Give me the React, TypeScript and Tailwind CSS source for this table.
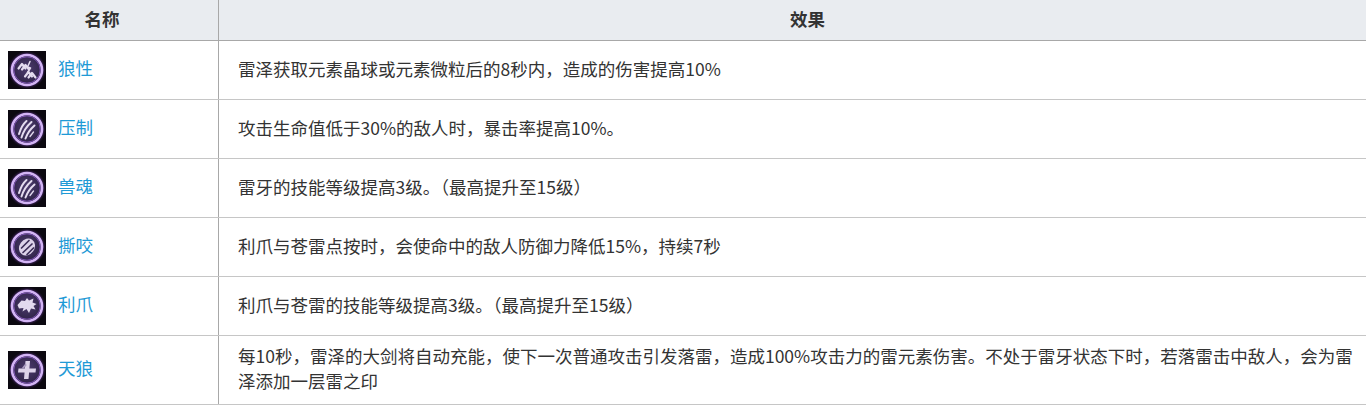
import React from "react";

type Glyph = "chevron" | "claw" | "bite" | "wolf" | "cross";

const rows: { name: string; glyph: Glyph; effect: string }[] = [
  { name: "狼性", glyph: "chevron", effect: "雷泽获取元素晶球或元素微粒后的8秒内，造成的伤害提高10%" },
  { name: "压制", glyph: "claw", effect: "攻击生命值低于30%的敌人时，暴击率提高10%。" },
  { name: "兽魂", glyph: "claw", effect: "雷牙的技能等级提高3级。（最高提升至15级）" },
  { name: "撕咬", glyph: "bite", effect: "利爪与苍雷点按时，会使命中的敌人防御力降低15%，持续7秒" },
  { name: "利爪", glyph: "wolf", effect: "利爪与苍雷的技能等级提高3级。（最高提升至15级）" },
  {
    name: "天狼",
    glyph: "cross",
    effect:
      "每10秒，雷泽的大剑将自动充能，使下一次普通攻击引发落雷，造成100%攻击力的雷元素伤害。不处于雷牙状态下时，若落雷击中敌人，会为雷泽添加一层雷之印",
  },
];

const GlyphShape = ({ glyph }: { glyph: Glyph }) => {
  const s = { stroke: "#e4dcef", fill: "none", strokeLinecap: "round" as const, strokeLinejoin: "round" as const };
  switch (glyph) {
    case "chevron":
      return (
        <g {...s} strokeWidth={2.2}>
          <path d="M10.5 17.5 L14 13 L17.5 17.5" />
          <path d="M14 18.5 L17.5 14 L21 18.5" />
          <path d="M17 25.5 L20.5 21 L24 25.5" />
          <path d="M20.5 26.5 L24 22 L27.5 26.5" />
          <path d="M22 10.5 L19.5 16 L22.5 17 L19.5 21.5" strokeWidth={1.5} />
        </g>
      );
    case "claw":
      return (
        <g {...s} strokeWidth={2}>
          <path d="M11 24 C 12.5 19, 14.5 14.5, 18.5 11" />
          <path d="M13.5 27.5 C 15.5 21, 19 16, 23.5 12" />
          <path d="M17.5 28.5 C 19.5 23, 22.5 19, 26.5 15.5" />
          <path d="M22 26.5 L25.5 22" strokeWidth={1.3} />
        </g>
      );
    case "bite":
      return (
        <g>
          <ellipse cx="19" cy="19" rx="7.5" ry="9" fill="#ddd3ea" transform="rotate(35 19 19)" />
          <g stroke="#3d2f58" strokeWidth={1.7} strokeLinecap="round">
            <path d="M13.5 20 L21 12.5" />
            <path d="M15 24.5 L24 16" />
            <path d="M19 26.5 L25.5 20" />
          </g>
        </g>
      );
    case "wolf":
      return (
        <path
          d="M9.5 18 L13.5 13.5 L17 14 L19 11 L21 13.5 L25.5 11.5 L24.5 15.5 L28.5 17 L25.5 19 L27.5 22.5 L23 21.5 L21 26 L18.5 22 L14.5 24.5 L15.5 21 L11 21.5 Z"
          fill="#e2d9ee"
        />
      );
    case "cross":
      return (
        <g fill="#ddd3ea">
          <path d="M17.5 10 L22 10 L20.5 28 L16 28 Z" />
          <path d="M10.5 17.5 L28 17.5 L27.5 21.5 L10 21.5 Z" />
          <path d="M13.5 17.5 L17.8 12 L18.6 14.3 L15.8 17.5 Z" fill="#a99bc0" />
        </g>
      );
  }
};

const SkillIcon = ({ glyph, id }: { glyph: Glyph; id: number }) => (
  <svg width="38" height="38" viewBox="0 0 38 38" className="shrink-0">
    <defs>
      <radialGradient id={`in${id}`} cx="50%" cy="45%" r="55%">
        <stop offset="0%" stopColor="#4d3c6e" />
        <stop offset="100%" stopColor="#2c2144" />
      </radialGradient>
      <radialGradient id={`gl${id}`} cx="50%" cy="50%" r="50%">
        <stop offset="75%" stopColor="#8a55c8" stopOpacity="0.9" />
        <stop offset="100%" stopColor="#2a1440" stopOpacity="0" />
      </radialGradient>
    </defs>
    <rect width="38" height="38" fill="#0b0810" />
    <circle cx="19" cy="19" r="19" fill={`url(#gl${id})`} />
    <circle cx="19" cy="19" r="15.5" fill={`url(#in${id})`} />
    <circle cx="19" cy="19" r="15" fill="none" stroke="#d3b4f5" strokeWidth="2.6" />
    <circle cx="19" cy="19" r="13.2" fill="none" stroke="#7b52b0" strokeWidth="1" />
    <GlyphShape glyph={glyph} />
  </svg>
);

export default function App() {
  return (
    <div
      className="w-[1366px] bg-white text-[17.5px] leading-[25px] text-[#333]"
      style={{ fontFamily: '"Microsoft YaHei", "Noto Sans CJK SC", "Noto Sans", sans-serif' }}
    >
      {/* header */}
      <div className="flex h-[41px] bg-[#e9ecf0] border-b border-[#a8a8a8] font-bold">
        <div className="w-[219px] shrink-0 border-r border-[#a8a8a8] flex items-center justify-center pr-[14px] pb-[3px]">
          名称
        </div>
        <div className="flex-1 flex items-center justify-center pl-[30px] pb-[3px]">效果</div>
      </div>

      {rows.map((row, i) => (
        <div key={row.name} className="flex border-b border-[#c6c6c6]">
          <div className="w-[219px] shrink-0 border-r border-[#a8a8a8] flex items-center gap-[12px] pl-[8px] py-[10px]">
            <SkillIcon glyph={row.glyph} id={i} />
            <span className="text-[#1f9ad6] mb-[6px]">{row.name}</span>
          </div>
          <div className="flex-1 flex items-center pl-[19px] pr-[10px] pt-[7px] pb-[11px]">
            <p>{row.effect}</p>
          </div>
        </div>
      ))}
    </div>
  );
}
